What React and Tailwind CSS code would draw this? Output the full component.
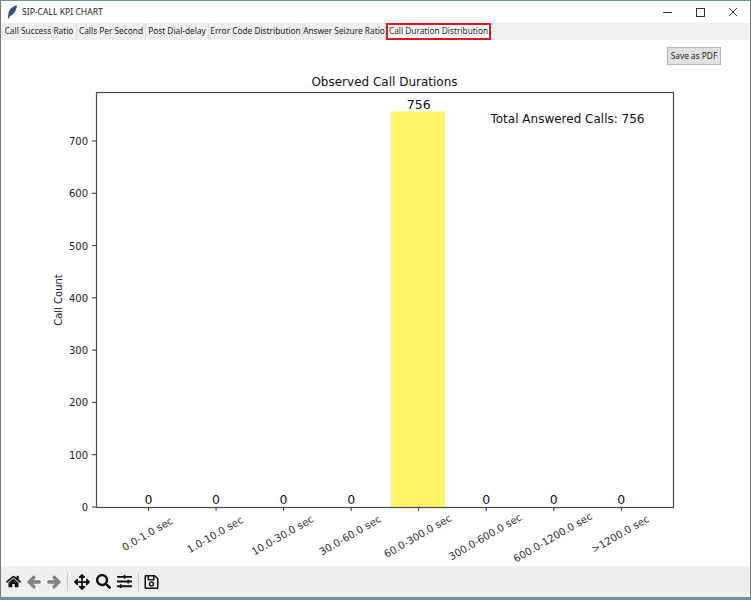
import React from "react";
import { FaHome, FaArrowLeft, FaArrowRight, FaArrowsAlt, FaSearch, FaSlidersH, FaRegSave } from "react-icons/fa";

const tabs = [
  ["Call Success Ratio", "w-[75px]"],
  ["Calls Per Second", "w-[69px]"],
  ["Post Dial-delay", "w-[63px]"],
  ["Error Code Distribution", "w-[94px]"],
  ["Answer Seizure Ratio", "w-[83px]"],
];
const yTicks = [0, 100, 200, 300, 400, 500, 600, 700];
const xLabels = ["0.0-1.0 sec", "1.0-10.0 sec", "10.0-30.0 sec", "30.0-60.0 sec", "60.0-300.0 sec", "300.0-600.0 sec", "600.0-1200.0 sec", ">1200.0 sec"];
const values = [0, 0, 0, 0, 756, 0, 0, 0];
const OY = 40;
const OX = 1;

function Chart() {
  const top = 92 - OY;
  const xs = xLabels.map((_, i) => 148.5 - OX + i * 67.55);
  return (
    <svg width="749" height="526" className="block absolute left-0 top-0" style={{ fontFamily: '"DejaVu Sans", sans-serif' }}>
      <rect x={391 - OX} y={111.5 - OY} width="54" height={507 - 111.5} fill="#fff566" />
      <rect x={96.5 - OX} y={top + 0.5} width="577" height={507 - 92} fill="none" stroke="#4a4a4a" strokeWidth="1.2" />
      {yTicks.map((t) => {
        const y = 507 - OY - t * 0.5229;
        return (
          <g key={t}>
            <line x1={92 - OX} x2={96 - OX} y1={y} y2={y} stroke="#333" strokeWidth="1" />
            <text x={88 - OX} y={y + 4} fontSize="10" textAnchor="end" fill="#222">{t}</text>
          </g>
        );
      })}
      {xs.map((x, i) => {
        const vy = values[i] ? 109 - OY : 504 - OY;
        const cx = x - 1;
        const cy = 534 - OY + (xLabels[i].length - 11) * 0.7;
        return (
          <g key={i}>
            <line x1={x} x2={x} y1={507 - OY} y2={511 - OY} stroke="#333" strokeWidth="1" />
            <text x={x} y={vy} fontSize="12.5" textAnchor="middle" fill="#111">{values[i]}</text>
            <text x={cx} y={cy} fontSize="10.2" textAnchor="middle" dominantBaseline="central" fill="#333" transform={`rotate(-30 ${cx} ${cy})`}>{xLabels[i]}</text>
          </g>
        );
      })}
      <text x={384.5 - OX} y={86 - OY} fontSize="12" textAnchor="middle" fill="#111">Observed Call Durations</text>
      <text x={567.5 - OX} y={123 - OY} fontSize="12" textAnchor="middle" fill="#111">Total Answered Calls: 756</text>
      <text x="0" y="0" fontSize="10" textAnchor="middle" fill="#222" transform={`translate(${62 - OX} ${300 - OY}) rotate(-90)`}>Call Count</text>
    </svg>
  );
}

export default function App() {
  return (
    <div className="w-[751px] h-[600px] bg-[#6f8fa3] overflow-hidden flex flex-col pt-px pb-[3px]" style={{ fontFamily: '"Noto Sans", sans-serif' }}>
      <div className="flex-1 min-h-0 flex flex-col bg-white border-l border-r border-[#7a7a7a]">
        <div className="h-[22px] shrink-0 flex items-center bg-white text-[8.6px] text-[#222] relative">
          <svg width="12" height="14" viewBox="0 0 12 14" className="ml-[5px] mr-[4px]">
            <path d="M11 0.5C6 1 2.5 5 2.3 9.5L1.8 13.5L3 13.5L3.9 11C8 10 10.5 5 11 0.5Z" fill="#35507a" />
          </svg>
          <span>SIP-CALL KPI CHART</span>
          <div className="ml-auto flex items-center">
            <svg width="33" height="22" viewBox="0 0 33 22"><line x1="12" x2="21" y1="11.5" y2="11.5" stroke="#333" /></svg>
            <svg width="33" height="22" viewBox="0 0 33 22"><rect x="12.5" y="7.5" width="8" height="8" fill="none" stroke="#333" /></svg>
            <svg width="33" height="22" viewBox="0 0 33 22"><path d="M12 7L20 15M20 7L12 15" stroke="#333" /></svg>
          </div>
        </div>
        <div className="h-[17px] shrink-0 flex items-stretch bg-[#f0f0f0] pl-px text-[8.3px] text-[#222]">
          {tabs.map(([t, w]) => (
            <div key={t} className={`${w} flex items-center justify-center whitespace-nowrap border-r border-[#dcdcdc]`}>{t}</div>
          ))}
          <div className="w-[105px] flex items-center justify-center whitespace-nowrap bg-white border-2 border-[#e8141c]">Call Duration Distribution</div>
        </div>
        <div className="flex-1 min-h-0 relative bg-white">
          <Chart />
          <div className="relative flex justify-end pt-[7px] pr-[29px]">
            <button className="w-[54px] h-[18px] flex items-center justify-center bg-[#e1e1e1] border border-[#b4b4b4] text-[8.3px] text-[#222] whitespace-nowrap">Save as PDF</button>
          </div>
        </div>
        <div className="h-[31px] shrink-0 flex items-center bg-[#efefef] pl-[5px] text-[#111]">
          <FaHome className="w-[15px] h-[15px]" />
          <FaArrowLeft className="w-[14px] h-[14px] ml-[6px] text-[#808080]" stroke="currentColor" strokeWidth="40" />
          <FaArrowRight className="w-[14px] h-[14px] ml-[6px] text-[#808080]" stroke="currentColor" strokeWidth="40" />
          <div className="w-px h-[18px] bg-[#c8c8c8] ml-[6px]" />
          <FaArrowsAlt className="w-[16px] h-[16px] ml-[6px]" />
          <FaSearch className="w-[15px] h-[15px] ml-[6px]" />
          <FaSlidersH className="w-[15px] h-[15px] ml-[6px]" />
          <div className="w-px h-[18px] bg-[#c8c8c8] ml-[6px]" />
          <FaRegSave className="w-[15px] h-[16px] ml-[5px]" />
        </div>
      </div>
    </div>
  );
}
